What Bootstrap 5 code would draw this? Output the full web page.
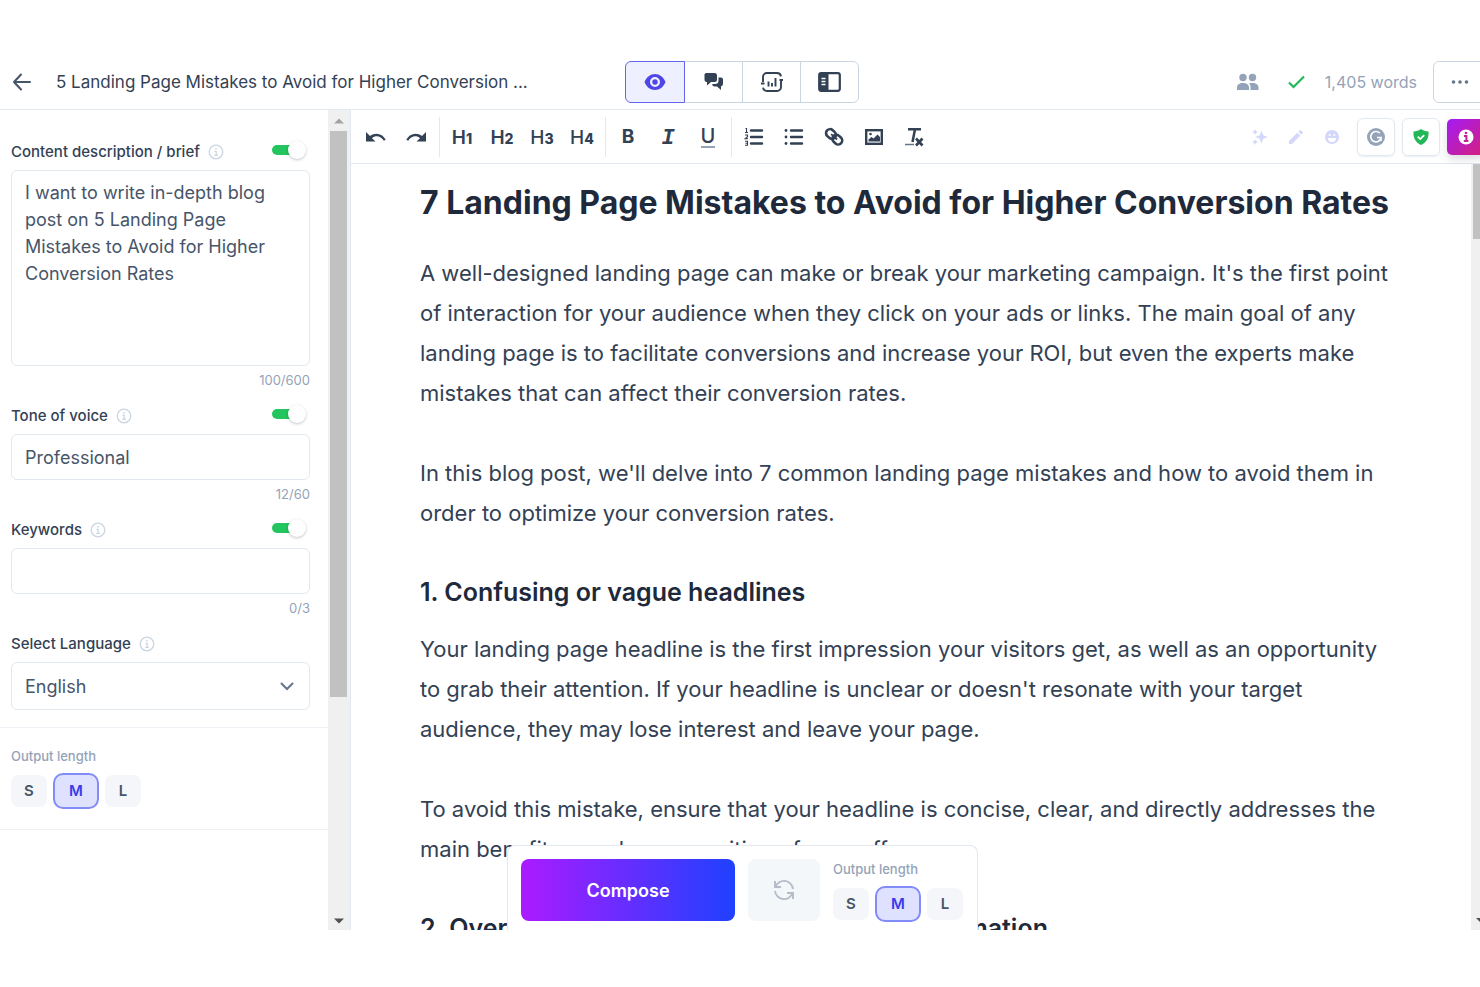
<!DOCTYPE html>
<html lang="en">
<head>
<meta charset="utf-8">
<meta name="viewport" content="width=device-width, initial-scale=1">
<title>5 Landing Page Mistakes to Avoid for Higher Conversion Rates</title>
<link href="https://cdn.jsdelivr.net/npm/bootstrap@5.3.0/dist/css/bootstrap.min.css" rel="stylesheet">
<style>
  :root { --ink: #334155; --muted: #94a3b8; --line: #e2e8f0; --indigo: #4f46e5; }
  body { font-family: Inter, "Liberation Sans", sans-serif; color: var(--ink); background: #fff; }
  svg { display: block; flex: none; }
  .app-shell { padding: 56px 0 57px; }
  .topbar { display: grid; grid-template-columns: 1fr auto 1fr; height: 54px; padding-bottom: 2px; border-bottom: 1px solid var(--line); }
  .doc-title { font-size: 17px; line-height: 24px; }
  .view-switch { margin-left: 4px; }
  .view-switch .btn { width: 59px; height: 42px; border-color: #cbd5e1; color: var(--ink); }
  .view-switch .btn.active { width: 60px; background: #eef0ff; border-color: #6366f1; color: var(--indigo); }
  .icon-btn { border: 0; padding: 0; background: none; color: inherit; display: flex; align-items: center; justify-content: center; }
  .word-count { font-size: 16px; line-height: 24px; color: var(--muted); }
  .more-btn { width: 54px; height: 42px; border: 1px solid #cbd5e1; border-radius: 6px; margin-right: -7px; color: #64748b; }

  .side-panel { width: 328px; }
  .side-fields { padding: 32px 18px 17px 11px; border-bottom: 1px solid #eef2f6; }
  .side-length { padding: 18px 18px 20px 11px; border-bottom: 1px solid #eef2f6; }
  .field-row { height: 20px; margin-bottom: 8px; }
  .field-row label { font-size: 15px; line-height: 20px; font-weight: 500; }
  .field-box { font-size: 18px; line-height: 27px; color: #475569; border: 1px solid var(--line); border-radius: 6px; padding: 8px 13px; height: 46px; resize: none; }
  textarea.field-box { height: 196px; }
  .form-select.field-box { height: 48px; background-image: none; }
  .select-chevron { position: absolute; right: 16px; top: 18px; pointer-events: none; }
  .field-count { font-size: 13px; line-height: 20px; margin: 4px 0 16px; color: var(--muted); text-align: right; }
  .flip { appearance: none; position: relative; width: 34px; height: 18px; margin: 0 4px 4px 0; }
  .flip::before { content: ""; position: absolute; left: 0; top: 4px; width: 28px; height: 10px; border-radius: 5px; background: #22c55e; }
  .flip::after { content: ""; position: absolute; right: 0; top: 0; width: 18px; height: 18px; border-radius: 50%; background: #fff; box-shadow: 0 1px 3px rgba(15, 23, 42, .25); }
  .length-title { font-size: 13px; line-height: 20px; font-weight: 500; color: var(--muted); }
  .length-set { gap: 6px; margin-top: 7px; }
  .length-opt { font-size: 15px; line-height: 20px; font-weight: 600; width: 36px; height: 32px; border-radius: 8px; background: #f4f6f9; color: #475569; display: flex; align-items: center; justify-content: center; }
  .btn-check:checked + .length-opt { width: 46px; height: 36px; border: 2px solid #818cf8; background: #dfe2ff; color: #3b3bea; border-radius: 10px; }

  .scroll-track { width: 23px; background: #f0f0f0; border-right: 1px solid var(--line); padding-left: 2px; }
  .scroll-track .thumb { width: 17px; height: 69%; background: #c1c1c1; }
  .scroll-track .arrow { width: 17px; height: 19px; flex: none; }
  .scroll-track .arrow:first-child { height: 21px; }
  .page-track { width: 9px; background: #f0f0f0; padding-left: 2px; }
  .page-track .thumb { height: 75px; background: #c1c1c1; }

  .toolbar { height: 54px; padding-left: 5px; border-bottom: 1px solid var(--line); }
  .toolbar .tool { width: 40px; height: 40px; }
  .tool-rule { width: 1px; height: 40px; background: var(--line); margin: 0 2px 0 3px; }
  .head-tool { font-size: 19px; line-height: 20px; font-weight: 600; }
  .head-tool.base { align-items: baseline; padding-top: 11px; }
  .head-tool span { font-size: 14px; font-weight: 800; }
  .head-tool.thin { font-weight: 500; }
  .head-tool.u-tool span { font-size: 20px; font-weight: 500; border-bottom: 2px solid #94a3b8; line-height: 20px; }
  .i-tool { font-family: "Liberation Mono", monospace; font-style: italic; font-weight: 700; font-size: 22px; line-height: 20px; padding-top: 4px; }
  .assist { width: 36px; height: 36px; color: #d3d8fb; }
  .boxed { width: 38px; height: 38px; border: 1px solid var(--line); border-radius: 6px; box-shadow: 0 1px 2px rgba(15, 23, 42, .08); margin-left: 7px; }
  .info-btn { width: 38px; height: 36px; border-radius: 5px; color: #fff; background: linear-gradient(135deg, #a41bf5, #d5207a); box-shadow: 0 4px 8px rgba(15, 23, 42, .15); margin: 0 -5px 0 7px; }

  .doc { max-width: 982px; color: #1e293b; padding-top: 16px; }
  .doc h1 { font-size: 32px; line-height: 46px; font-weight: 700; margin-bottom: 27px; }
  .doc p { font-size: 22px; line-height: 40px; font-weight: 400; color: #334155; margin-bottom: 40px; }
  .doc h2 { font-size: 25px; line-height: 36px; font-weight: 600; margin-bottom: 19px; }
  .doc .before-head { margin-bottom: 41px; }

  .composer { position: absolute; left: 156px; bottom: 0; width: 471px; height: 85px; background: #fff; border: 1px solid var(--line); border-bottom: 0; border-radius: 8px 8px 0 0; padding: 13px; }
  .compose-btn { width: 214px; height: 62px; border-radius: 8px; font-size: 18px; font-weight: 600; color: #fff; background: linear-gradient(90deg, #ab1bff, #1f41ff); }
  .again-btn { width: 72px; height: 62px; border-radius: 8px; background: #f4f7fa; color: #b4bcc8; margin: 0 13px; }
</style>
</head>
<body>
<svg width="0" height="0" class="position-absolute" aria-hidden="true">
  <symbol id="info" viewBox="0 0 16 16"><circle cx="8" cy="8" r="6.8" fill="none" stroke="#cbd5e1" stroke-width="1.3"/><path d="M6.6 7.3h1.6v4M6.3 11.4h3.6" fill="none" stroke="#cbd5e1" stroke-width="1.2"/><circle cx="8" cy="4.8" r=".9" fill="#cbd5e1"/></symbol>
</svg>
<div class="app-shell vh-100 d-flex flex-column overflow-hidden">
  <header class="topbar flex-shrink-0">
    <div class="d-flex align-items-center ps-2">
      <button class="icon-btn p-1" aria-label="Back"><svg width="20" height="20" viewBox="0 0 20 20" fill="none" stroke="#475569" stroke-width="2" stroke-linecap="round" stroke-linejoin="round"><path d="M18 10H2M9 2.500L2 10l7 7.500"/></svg></button>
      <div class="doc-title ms-3 ps-1 text-nowrap">5 Landing Page Mistakes to Avoid for Higher Conversion ...</div>
    </div>
    <div class="btn-group view-switch align-self-center" role="group" aria-label="View">
      <button class="btn active p-0 d-flex align-items-center justify-content-center" aria-label="Preview"><svg width="22" height="18" viewBox="0 0 22 18"><path fill="currentColor" fill-rule="evenodd" d="M11 1c4.600 0 8.600 3 10.500 8-1.900 5-5.900 8-10.500 8S2.400 14 .5 9C2.400 4 6.400 1 11 1zm0 3a5 5 0 1 0 0 10 5 5 0 0 0 0-10zm0 2.300a2.700 2.700 0 1 1 0 5.400 2.700 2.700 0 0 1 0-5.400z"/></svg></button>
      <button class="btn p-0 d-flex align-items-center justify-content-center" aria-label="Chat"><svg width="20" height="18" viewBox="0 0 20 18" fill="currentColor"><path d="M2.500 0h8A2.500 2.500 0 0 1 13 2.500v4A2.500 2.500 0 0 1 10.500 9H7l-4 3.500V9A2.500 2.500 0 0 1 .5 6.500v-4A2 2 0 0 1 2.500 0z"/><path d="M14.500 4.500h2A2.300 2.300 0 0 1 19 7v4a2.300 2.300 0 0 1-2 2.300V17l-4-3.500h-2.500A2.300 2.300 0 0 1 8.300 11h2.700a3.500 3.500 0 0 0 3.500-3.500z"/></svg></button>
      <button class="btn p-0 d-flex align-items-center justify-content-center" aria-label="Statistics"><svg width="22" height="20" viewBox="0 0 22 20" fill="none" stroke="currentColor" stroke-width="1.900"><path d="M2 10V5a4 4 0 0 1 4-4h10a4 4 0 0 1 4 3.300M20 7.500V15a4 4 0 0 1-4 4H6a4 4 0 0 1-4-3.300M0 11.500h3.500M18.500 8H22M7.500 9.500v5M11 11v3.500M14.500 6v8.500"/></svg></button>
      <button class="btn p-0 d-flex align-items-center justify-content-center" aria-label="Toggle panel"><svg width="23" height="20" viewBox="0 0 23 20"><rect x="1.200" y="1.200" width="20.600" height="17.600" rx="2" fill="none" stroke="currentColor" stroke-width="2.200"/><path fill="currentColor" d="M1 1h9.500v18H1z"/><path d="M3.500 6.500h4M3.500 9.500h4M3.500 12.500h4" stroke="#fff" stroke-width="1.400"/></svg></button>
    </div>
    <div class="d-flex align-items-center justify-content-end">
      <button class="icon-btn" aria-label="Collaborators"><svg width="22" height="18" viewBox="0 0 22 18" fill="#94a3b8"><circle cx="6" cy="4.500" r="3.700"/><circle cx="15.500" cy="4.500" r="3.700"/><path d="M0 17v-2.500C0 11.500 2.500 10 6 10s6 1.500 6 4.500V17zM13.500 17v-3c0-1.500-.5-2.800-1.600-3.700 1-.2 2.200-.3 3.600-.3 3.500 0 6 1.500 6 4.500V17z"/></svg></button>
      <svg class="ms-4 me-3" width="26" height="16" viewBox="0 0 26 16" fill="none" stroke="#22b859" stroke-width="2.200"><path d="M6 8.500l4.500 4.500L21 2.500"/></svg>
      <span class="word-count text-nowrap me-3">1,405 words</span>
      <button class="icon-btn more-btn" aria-label="More"><svg width="18" height="4" viewBox="0 0 18 4" fill="currentColor"><circle cx="2.500" cy="2" r="1.800"/><circle cx="9" cy="2" r="1.800"/><circle cx="15.500" cy="2" r="1.800"/></svg></button>
    </div>
  </header>

  <div class="d-flex flex-grow-1 overflow-hidden">
    <aside class="side-panel flex-shrink-0">
      <form class="side-fields">
        <div class="field-row d-flex align-items-center">
          <label for="brief">Content description / brief</label>
          <svg class="ms-2" width="16" height="16"><use href="#info" width="16" height="16"/></svg>
          <input class="flip ms-auto" type="checkbox" checked aria-label="Use content description">
        </div>
        <textarea id="brief" class="form-control field-box">I want to write in-depth blog post on 5 Landing Page Mistakes to Avoid for Higher Conversion Rates</textarea>
        <div class="field-count">100/600</div>

        <div class="field-row d-flex align-items-center">
          <label for="tone">Tone of voice</label>
          <svg class="ms-2" width="16" height="16"><use href="#info" width="16" height="16"/></svg>
          <input class="flip ms-auto" type="checkbox" checked aria-label="Use tone of voice">
        </div>
        <input id="tone" class="form-control field-box" type="text" value="Professional">
        <div class="field-count">12/60</div>

        <div class="field-row d-flex align-items-center">
          <label for="keywords">Keywords</label>
          <svg class="ms-2" width="16" height="16"><use href="#info" width="16" height="16"/></svg>
          <input class="flip ms-auto" type="checkbox" checked aria-label="Use keywords">
        </div>
        <input id="keywords" class="form-control field-box" type="text">
        <div class="field-count">0/3</div>

        <div class="field-row d-flex align-items-center">
          <label for="language">Select Language</label>
          <svg class="ms-2" width="16" height="16"><use href="#info" width="16" height="16"/></svg>
        </div>
        <div class="position-relative">
          <select id="language" class="form-select field-box"><option>English</option></select>
          <svg class="select-chevron" width="14" height="12" viewBox="0 0 14 12" fill="none" stroke="#64748b" stroke-width="2" stroke-linecap="round"><path d="M1.500 3.500L7 9l5.500-5.500"/></svg>
        </div>
      </form>
      <div class="side-length">
        <div class="length-title">Output length</div>
        <div class="length-set d-flex align-items-center" role="group" aria-label="Output length">
          <input class="btn-check" type="radio" name="len" id="len-s"><label class="length-opt" for="len-s">S</label>
          <input class="btn-check" type="radio" name="len" id="len-m" checked><label class="length-opt" for="len-m">M</label>
          <input class="btn-check" type="radio" name="len" id="len-l"><label class="length-opt" for="len-l">L</label>
        </div>
      </div>
    </aside>

    <div class="scroll-track flex-shrink-0 d-flex flex-column">
      <div class="arrow d-flex align-items-center justify-content-center"><svg width="10" height="6" viewBox="0 0 10 6"><path d="M0 5.500L5 .5l5 5z" fill="#a3a3a3"/></svg></div>
      <div class="thumb"></div>
      <div class="arrow mt-auto d-flex align-items-center justify-content-center"><svg width="10" height="6" viewBox="0 0 10 6"><path d="M0 .5h10l-5 5z" fill="#505050"/></svg></div>
    </div>

    <main class="flex-grow-1 d-flex flex-column overflow-hidden position-relative">
      <div class="toolbar d-flex align-items-center flex-shrink-0">
        <button class="icon-btn tool" aria-label="Undo"><svg width="22" height="12" viewBox="0 0 22 12"><path d="M1 1v9.500h9.500L7 7.300c3.500-3.400 9-2.400 11.800 2.500l1.900-1C17.500 2.500 10.500 1 5 5z" fill="currentColor"/></svg></button>
        <button class="icon-btn tool" aria-label="Redo"><svg width="22" height="12" viewBox="0 0 22 12"><path d="M21 1v9.500h-9.500L15 7.300C11.500 3.900 6 4.900 3.200 9.800l-1.900-1C4.500 2.500 11.500 1 17 5z" fill="currentColor"/></svg></button>
        <div class="tool-rule"></div>
        <button class="icon-btn tool head-tool base">H<span>1</span></button>
        <button class="icon-btn tool head-tool base">H<span>2</span></button>
        <button class="icon-btn tool head-tool base thin">H<span>3</span></button>
        <button class="icon-btn tool head-tool base thin">H<span>4</span></button>
        <div class="tool-rule"></div>
        <button class="icon-btn tool head-tool fw-bold">B</button>
        <button class="icon-btn tool i-tool">I</button>
        <button class="icon-btn tool head-tool thin u-tool"><span>U</span></button>
        <div class="tool-rule"></div>
        <button class="icon-btn tool" aria-label="Numbered list"><svg width="20" height="20" viewBox="0 0 20 20"><path d="M7 3.500h11M7 10h11M7 16.500h11" stroke="currentColor" stroke-width="2.400" stroke-linecap="round"/><path d="M1.500 1.500h1v4M1 5.500h3M1 8h2.500v1.700L1 11.800h3M1 14.300h2.500v4H1M1.500 16.300h2" fill="none" stroke="currentColor" stroke-width="1.100"/></svg></button>
        <button class="icon-btn tool" aria-label="Bulleted list"><svg width="20" height="20" viewBox="0 0 20 20"><path d="M7 3.500h11M7 10h11M7 16.500h11" stroke="currentColor" stroke-width="2.400" stroke-linecap="round"/><g fill="currentColor"><circle cx="2" cy="3.500" r="1.400"/><circle cx="2" cy="10" r="1.400"/><circle cx="2" cy="16.500" r="1.400"/></g></svg></button>
        <button class="icon-btn tool" aria-label="Link"><svg width="20" height="20" viewBox="0 0 20 20" fill="none" stroke="currentColor" stroke-width="2.600"><g transform="rotate(42 10 10)"><rect x="0.500" y="5.800" width="10.500" height="8" rx="4"/><rect x="9" y="5.800" width="10.500" height="8" rx="4"/><path d="M6 9.800h8" stroke-width="1.800"/></g></svg></button>
        <button class="icon-btn tool" aria-label="Image"><svg width="20" height="18" viewBox="0 0 20 18"><rect x="2.200" y="2.200" width="15.600" height="13.600" fill="none" stroke="currentColor" stroke-width="2.400"/><path d="M4.500 13.500v-2l3-2.500 2 1.500 4-4 2.500 2.500v4.500z" fill="currentColor"/><circle cx="6.500" cy="6" r="1.300" fill="currentColor"/></svg></button>
        <button class="icon-btn tool" aria-label="Clear formatting"><svg width="20" height="20" viewBox="0 0 20 20" fill="none" stroke="currentColor"><path d="M4 2.200h13M11 2.200L8.500 15" stroke-width="2.500"/><path d="M1 17.500h9" stroke="#64748b" stroke-width="1.500"/><path d="M12 11.500l6.500 7M18.500 11.500l-6.500 7" stroke-width="2.600"/></svg></button>

        <div class="d-flex align-items-center ms-auto">
          <button class="icon-btn assist" aria-label="Improve"><svg width="16" height="16" viewBox="0 0 16 16" fill="currentColor"><path d="M9.500 1.500l1.700 4.800L15.800 8l-4.600 1.700-1.700 4.800-1.700-4.800L3.200 8l4.600-1.700zM3 0l.9 2.100L6 3l-2.100.9L3 6l-.9-2.100L0 3l2.100-.9zM3 10l.9 2.100L6 13l-2.100.9L3 16l-.9-2.100L0 13l2.100-.9z"/></svg></button>
          <button class="icon-btn assist" aria-label="Rewrite"><svg width="14" height="14" viewBox="0 0 14 14" fill="currentColor"><path d="M0 11l8.200-8.200 3 3L3 14H0zM9.300 1.700L10.700.4a1 1 0 0 1 1.400 0l1.500 1.500a1 1 0 0 1 0 1.400l-1.300 1.400z"/></svg></button>
          <button class="icon-btn assist" aria-label="Emoji"><svg width="14" height="14" viewBox="0 0 14 14"><circle cx="7" cy="7" r="7" fill="currentColor"/><circle cx="4.700" cy="5" r="1.100" fill="#fff"/><circle cx="9.300" cy="5" r="1.100" fill="#fff"/><path d="M3 8h8a4 4 0 0 1-8 0z" fill="#fff"/></svg></button>
          <button class="icon-btn boxed" aria-label="Grammar check"><svg width="18" height="18" viewBox="0 0 18 18"><circle cx="9" cy="9" r="9" fill="#94a3b8"/><path d="M12.800 5.200a5.200 5.200 0 1 0 1.300 4.300H10M13.900 9.500V13" fill="none" stroke="#fff" stroke-width="1.700"/></svg></button>
          <button class="icon-btn boxed" aria-label="Plagiarism check"><svg width="16" height="16" viewBox="0 0 16 16"><path d="M8 0c2 1.500 4.500 2.300 7.500 2.500C16 9 13.500 13.500 8 16 2.500 13.500 0 9 .5 2.500 3.500 2.300 6 1.500 8 0z" fill="#22b859"/><path d="M4.800 7.700l2.400 2.400 4-4" fill="none" stroke="#fff" stroke-width="1.800"/></svg></button>
          <button class="icon-btn info-btn" aria-label="Information"><svg width="16" height="16" viewBox="0 0 16 16"><circle cx="8" cy="8" r="7.500" fill="#fff"/><path d="M6 7h2.400v5M5.800 12h4.600" fill="none" stroke="#c41e98" stroke-width="2"/><circle cx="8" cy="4" r="1.300" fill="#c41e98"/></svg></button>
        </div>
      </div>

      <div class="d-flex flex-grow-1 overflow-hidden">
        <div class="flex-grow-1 overflow-hidden">
          <article class="doc mx-auto">
            <h1>7 Landing Page Mistakes to Avoid for Higher Conversion Rates</h1>
            <p>A well-designed landing page can make or break your marketing campaign. It's the first point of interaction for your audience when they click on your ads or links. The main goal of any landing page is to facilitate conversions and increase your ROI, but even the experts make mistakes that can affect their conversion rates.</p>
            <p class="before-head">In this blog post, we'll delve into 7 common landing page mistakes and how to avoid them in order to optimize your conversion rates.</p>
            <h2>1. Confusing or vague headlines</h2>
            <p>Your landing page headline is the first impression your visitors get, as well as an opportunity to grab their attention. If your headline is unclear or doesn't resonate with your target audience, they may lose interest and leave your page.</p>
            <p class="before-head">To avoid this mistake, ensure that your headline is concise, clear, and directly addresses the main benefits or value proposition of your offer.</p>
            <h2>2. Overloading your page with too much information</h2>
          </article>
        </div>
        <div class="page-track flex-shrink-0 d-flex flex-column">
          <div class="thumb"></div>
          <svg class="mt-auto mb-2" width="7" height="4" viewBox="0 0 7 4"><path d="M3 0h8L7 4z" fill="#505050"/></svg>
        </div>
      </div>

      <div class="composer d-flex">
        <button class="icon-btn compose-btn flex-shrink-0">Compose</button>
        <button class="icon-btn again-btn flex-shrink-0" aria-label="Regenerate"><svg width="22" height="22" viewBox="0 0 22 22" fill="none" stroke="currentColor" stroke-width="1.900"><path d="M2 2v6h6M2.500 8A9 9 0 0 1 20 10M20 20v-6h-6M19.500 14A9 9 0 0 1 2 12"/></svg></button>
        <div>
          <div class="length-title">Output length</div>
          <div class="length-set d-flex align-items-center" role="group" aria-label="Output length">
            <input class="btn-check" type="radio" name="out" id="out-s"><label class="length-opt" for="out-s">S</label>
            <input class="btn-check" type="radio" name="out" id="out-m" checked><label class="length-opt" for="out-m">M</label>
            <input class="btn-check" type="radio" name="out" id="out-l"><label class="length-opt" for="out-l">L</label>
          </div>
        </div>
      </div>
    </main>
  </div>
</div>
<script src="https://cdn.jsdelivr.net/npm/bootstrap@5.3.0/dist/js/bootstrap.bundle.min.js"></script>
</body>
</html>
